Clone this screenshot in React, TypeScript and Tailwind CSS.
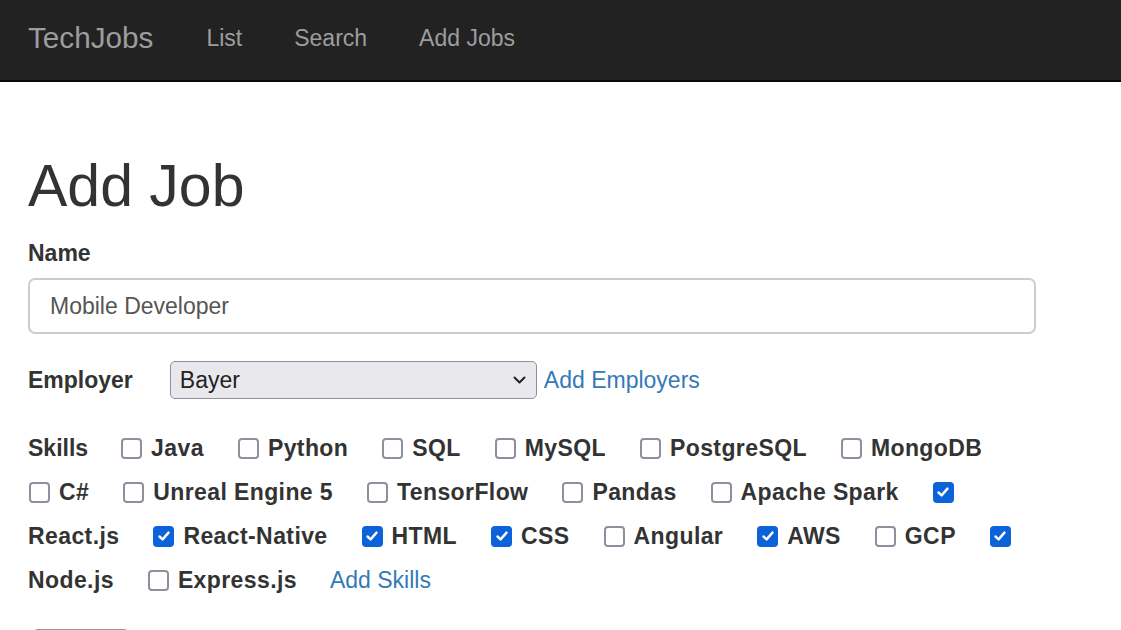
import React from "react";

const skills: [string, boolean][] = [
  ["Java", false],
  ["Python", false],
  ["SQL", false],
  ["MySQL", false],
  ["PostgreSQL", false],
  ["MongoDB", false],
  ["C#", false],
  ["Unreal Engine 5", false],
  ["TensorFlow", false],
  ["Pandas", false],
  ["Apache Spark", false],
  ["React.js", true],
  ["React-Native", true],
  ["HTML", true],
  ["CSS", true],
  ["Angular", false],
  ["AWS", true],
  ["GCP", false],
  ["Node.js", true],
  ["Express.js", false],
];

function Box({ checked }: { checked: boolean }) {
  if (checked) {
    return (
      <span className="ml-[1px] mr-[9px] flex h-[21px] w-[21px] items-center justify-center rounded-[4px] bg-[#0b62d9]">
        <svg width="14" height="14" viewBox="0 0 14 14" fill="none">
          <path d="M2.5 7.5 L5.6 10.4 L11.5 3.6" stroke="white" strokeWidth="2.4" strokeLinecap="round" strokeLinejoin="round" />
        </svg>
      </span>
    );
  }
  return <span className="ml-[1px] mr-[9px] block h-[21px] w-[21px] rounded-[4px] border-2 border-[#8f8f9d] bg-white" />;
}

export default function App() {
  return (
    <div className="min-h-screen bg-white text-[#333] font-['Liberation_Sans',Arial,sans-serif]">
      {/* Navbar */}
      <nav className="flex h-[82px] items-center border-b-2 border-[#080808] bg-[#222] pb-[4px]">
        <a className="pl-[28px] pr-[27px] text-[29.7px] text-[#9d9d9d]" href="#">TechJobs</a>
        <a className="px-[26px] text-[23px] text-[#9d9d9d]" href="#">List</a>
        <a className="px-[26px] text-[23px] text-[#9d9d9d]" href="#">Search</a>
        <a className="px-[26px] text-[23px] text-[#9d9d9d]" href="#">Add Jobs</a>
      </nav>

      <main className="px-[28px]">
        <h1 className="mt-[72px] text-[59px] leading-[65px]">Add Job</h1>

        <form className="w-[1008px]">
          <label className="mt-[18px] block text-[23px] font-bold leading-[33px]">Name</label>
          <input
            className="mt-[8px] block h-[56px] w-full rounded-[7px] border-2 border-[#ccc] px-[20px] text-[23px] text-[#555] outline-none"
            defaultValue="Mobile Developer"
          />

          <div className="mt-[27px] flex h-[38px] items-center text-[23px]">
            <label className="mr-[37px] font-bold">Employer</label>
            <div className="relative">
              <select className="h-[38px] w-[367px] appearance-none rounded-[5px] border-[1.5px] border-[#8f8f9d] bg-[#e9e9ed] pl-[9px] text-[23px] text-[#222] outline-none">
                <option>Bayer</option>
              </select>
              <svg className="pointer-events-none absolute right-[11px] top-[15px]" width="13" height="9" viewBox="0 0 13 9" fill="none">
                <path d="M1.5 1.5 L6.5 6.5 L11.5 1.5" stroke="#222" strokeWidth="2" strokeLinecap="round" strokeLinejoin="round" />
              </svg>
            </div>
            <a className="ml-[7px] text-[#337ab7]" href="#">Add Employers</a>
          </div>

          <div className="mt-[27px] flex flex-wrap items-center text-[23px] leading-[44px]">
            <label className="mr-[32px] font-bold">Skills</label>
            {skills.map(([name, checked]) => (
              <React.Fragment key={name}>
                <Box checked={checked} />
                <span className="mr-[33px] font-bold tracking-[0.4px]">{name}</span>
              </React.Fragment>
            ))}
            <a className="text-[#337ab7]" href="#">Add Skills</a>
          </div>

          <button type="button" className="mt-[27px] ml-[4px] h-[56px] w-[98px] rounded-[6px] border-2 border-[#999] bg-[#f5f5f5] text-[23px]">
            Submit
          </button>
        </form>
      </main>
    </div>
  );
}
